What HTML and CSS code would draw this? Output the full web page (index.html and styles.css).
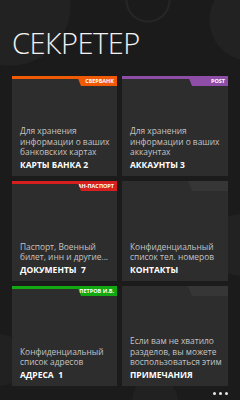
FILE: index.html
```html
<!DOCTYPE html>
<html lang="ru">
<head>
<meta charset="utf-8">
<link rel="stylesheet" href="styles.css">
</head>
<body>
<div class="screen">
  <h1 class="app-title">СЕКРЕТЕР</h1>
  <div class="tiles">
    <div class="tile bar-orange">
      <div class="tab"><span class="tab-text">СБЕРБАНК</span></div>
      <p class="desc">Для хранения информации о ваших банковских картах</p>
      <p class="name">КАРТЫ БАНКА 2</p>
    </div>
    <div class="tile bar-purple">
      <div class="tab"><span class="tab-text">POST</span></div>
      <p class="desc">Для хранения информации о ваших аккаунтах</p>
      <p class="name">АККАУНТЫ 3</p>
    </div>
    <div class="tile bar-red">
      <div class="tab"><span class="tab-text">ИВАН-ПАСПОРТ</span></div>
      <p class="desc">Паспорт, Военный билет, инн и другие...</p>
      <p class="name">ДОКУМЕНТЫ&nbsp; 7</p>
    </div>
    <div class="tile bar-none">
      <div class="tab"></div>
      <p class="desc">Конфиденциальный список тел. номеров</p>
      <p class="name">КОНТАКТЫ</p>
    </div>
    <div class="tile bar-green">
      <div class="tab"><span class="tab-text">ПЕТРОВ И.В.</span></div>
      <p class="desc">Конфиденциальный список адресов</p>
      <p class="name">АДРЕСА&nbsp; 1</p>
    </div>
    <div class="tile bar-none">
      <div class="tab"></div>
      <p class="desc">Если вам не хватило разделов, вы можете воспользоваться этим</p>
      <p class="name">ПРИМЕЧАНИЯ</p>
    </div>
  </div>
  <div class="more"><span></span><span></span><span></span></div>
</div>
</body>
</html>
```

FILE: styles.css
```css
* { box-sizing: border-box; }
html, body { margin: 0; padding: 0; }
body {
  width: 240px;
  height: 400px;
  overflow: hidden;
  font-family: "Open Sans", "Noto Sans", sans-serif;
  color: #fff;
  background-color: #1b1b1b;
  background-image:
    radial-gradient(circle at 10px 5px, #222 0, #222 60px, transparent 61px),
    radial-gradient(circle at 250px 20px, #222 0, #222 40px, transparent 41px),
    radial-gradient(circle at 148px 0px, transparent 0, transparent 20px, #262626 21px, #262626 22px, transparent 23px),
    radial-gradient(circle at 240px 245px, #222 0, #222 30px, transparent 31px),
    radial-gradient(circle at 0px 360px, #212121 0, #212121 25px, transparent 26px),
    radial-gradient(circle at 155px 400px, #212121 0, #212121 22px, transparent 23px);
  background-repeat: no-repeat;
}
.screen {
  display: flex;
  flex-direction: column;
  padding: 0 12px;
}
.app-title {
  margin: 0;
  height: 76px;
  padding-top: 27px;
  font-size: 29px;
  line-height: 32px;
  font-weight: 300;
  letter-spacing: -0.5px;
  color: #f2f2f2;
}
.tiles {
  display: grid;
  grid-template-columns: 105px 106px;
  grid-auto-rows: 100px;
  gap: 5px;
}
.tile {
  position: relative;
  background: #2d2d2d;
  border-top: 3px solid transparent;
  display: flex;
  flex-direction: column;
  justify-content: flex-end;
  padding: 0 6px 5px 8px;
}
.tab {
  position: absolute;
  top: -3px;
  right: 0;
  width: 40px;
  height: 10px;
  padding-right: 3px;
  font-size: 5.5px;
  line-height: 10px;
  font-weight: 700;
  text-align: right;
  white-space: nowrap;
  overflow: hidden;
  direction: rtl;
  clip-path: polygon(0 0, 100% 0, 100% 100%, 4px 100%);
}
.tab-text {
  direction: ltr;
  unicode-bidi: isolate;
}
.bar-orange { border-top-color: #f05a05; }
.bar-orange .tab { background: #f05a05; }
.bar-purple { border-top-color: #8e4ea8; }
.bar-purple .tab { background: #8e4ea8; }
.bar-red { border-top-color: #d81f1f; }
.bar-red .tab { background: #d81f1f; }
.bar-green { border-top-color: #12a812; }
.bar-green .tab { background: #12a812; }
.bar-none { border-top-color: #2d2d2d; }
.bar-none .tab { background: #363636; }
.desc {
  margin: 0;
  font-size: 8.4px;
  line-height: 10.7px;
  color: #c4c4c4;
}
.name {
  margin: 1px 0 0;
  font-size: 8.5px;
  line-height: 12px;
  font-weight: 700;
  color: #fff;
}
.more {
  display: flex;
  justify-content: flex-end;
  gap: 3px;
  padding: 6px 0 0;
}
.more span {
  width: 3px;
  height: 3px;
  border-radius: 50%;
  background: #e8e8e8;
}
```
